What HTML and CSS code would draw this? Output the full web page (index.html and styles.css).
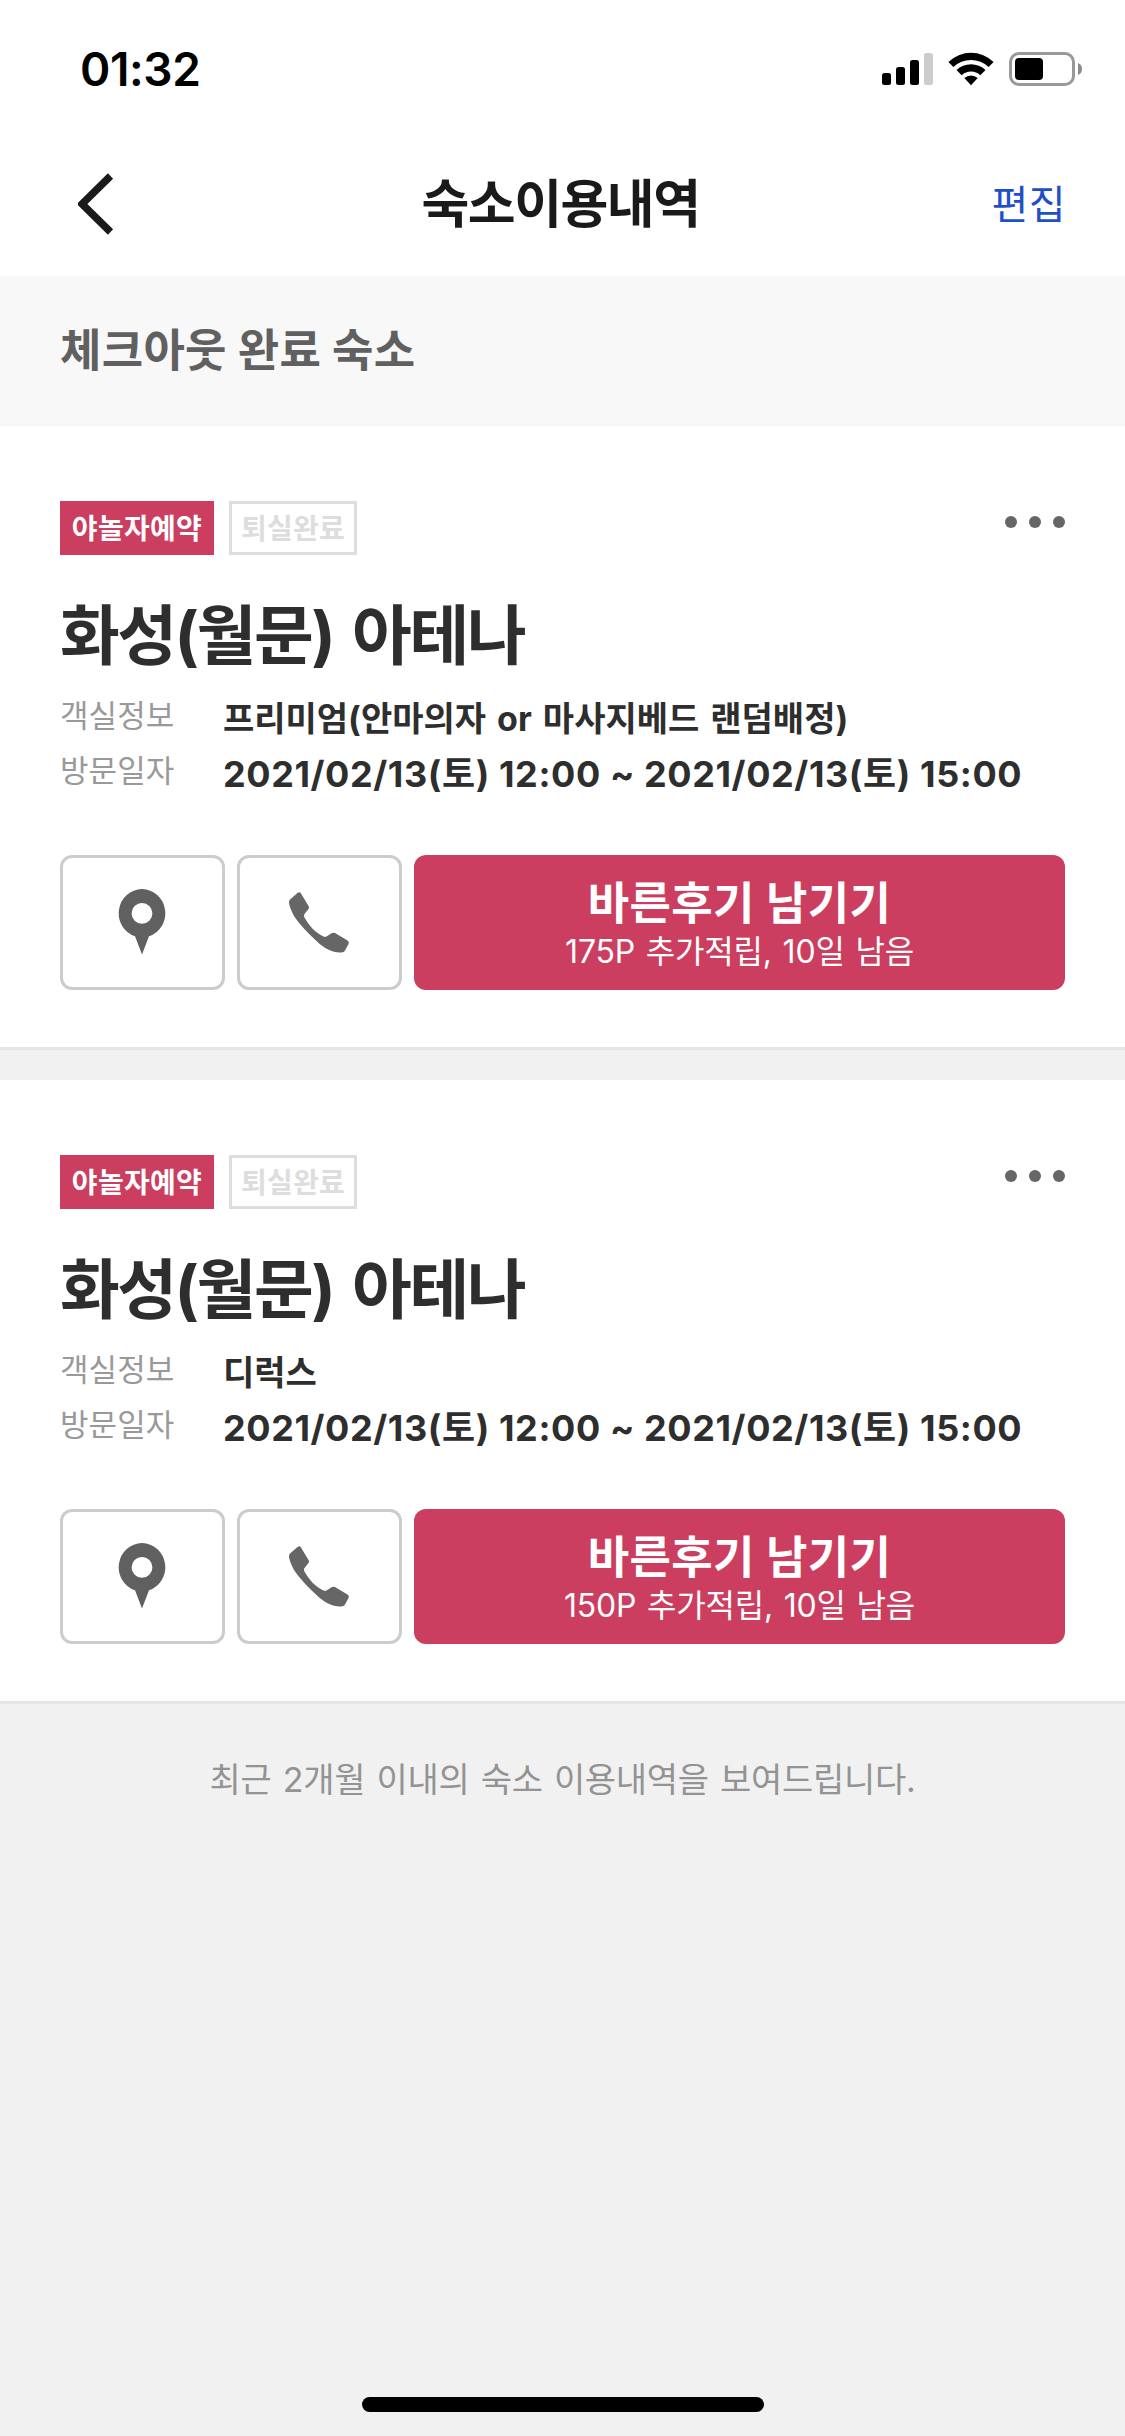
FILE: index.html
```html
<!DOCTYPE html>
<html lang="ko">
<head>
<meta charset="utf-8">
<title>숙소이용내역</title>
<link rel="stylesheet" href="styles.css">
</head>
<body>
<div class="screen">
  <div class="statusbar">
    <span class="clock">01:32</span>
    <div class="status-icons">
      <svg class="signal" width="51" height="33" viewBox="0 0 51 33"><rect x="0" y="20" width="9" height="12" rx="2.5"/><rect x="14" y="14" width="9" height="18" rx="2.5"/><rect x="28" y="7" width="9" height="25" rx="2.5"/><rect x="42" y="0" width="9" height="32" rx="2.5" fill="#ccc"/></svg>
      <svg class="wifi" width="46" height="34" viewBox="0 0 46 34"><path d="M0.4 10A32.5 32.5 0 0 1 45.6 10L40.6 15A25.4 25.4 0 0 0 5.4 15Z"/><path d="M8.5 18A21 21 0 0 1 37.5 18L32.3 23.2A13.6 13.6 0 0 0 13.7 23.2Z"/><path d="M16.3 26A10 10 0 0 1 29.7 26L23 33.2Z"/></svg>
      <svg class="battery" width="73" height="34" viewBox="0 0 73 34"><rect x="1.5" y="1.5" width="63" height="31" rx="8.5" fill="none" stroke="#999" stroke-width="3"/><rect x="6" y="6" width="28" height="22" rx="4"/><path d="M69 11a6.5 6.5 0 0 1 0 12z" fill="#8c8c8c"/></svg>
    </div>
  </div>
  <header class="navbar">
    <svg class="back" width="36" height="62" viewBox="0 0 36 62"><path d="M32.5 3L4 31L32.5 59" fill="none" stroke="#1a1a1a" stroke-width="7.4"/></svg>
    <h1 class="nav-title">숙소이용내역</h1>
    <a class="nav-edit">편집</a>
  </header>
  <h2 class="section-title">체크아웃 완료 숙소</h2>

  <article class="card">
    <div class="card-top">
      <div class="badges"><span class="badge badge-solid">야놀자예약</span><span class="badge badge-outline">퇴실완료</span></div>
      <div class="more"><i></i><i></i><i></i></div>
    </div>
    <h3 class="hotel">화성(월문) 아테나</h3>
    <dl class="info">
      <dt>객실정보</dt><dd>프리미엄(안마의자 or 마사지베드 랜덤배정)</dd>
      <dt>방문일자</dt><dd class="dates">2021/02/13(토) 12:00 ~ 2021/02/13(토) 15:00</dd>
    </dl>
    <div class="actions">
      <a class="icon-btn"><svg width="49" height="67" viewBox="0 0 49 67"><path fill-rule="evenodd" d="M24 0a24 24.300 0 0 1 7 47.300L24 65.500L17 47.300A24 24.300 0 0 1 24 0zM24 14a10.400 10.400 0 1 0 0 20.800a10.400 10.400 0 0 0 0-20.800z" fill="#606060"/></svg></a>
      <a class="icon-btn"><svg width="61" height="61" viewBox="0 0 61 61"><path d="M1 7.500L8.500 1Q10.800-.5 12 1.500L19.500 14Q20.500 15.500 19.500 17L15.500 22Q14.500 23.500 15.500 25.500C20 34 27 41 34.500 44.500Q36 45.200 37.500 44.500L42.500 41.200Q44.500 40.300 46 41L58.500 48.500Q60.500 50 59.500 52L56 58.500Q55.200 60 53.500 60.300C45 61.500 36 57 28 49.500C20 42 10 32 5 24C2 18 0 13 0 10Q0 8.500 1 7.500z" fill="#666"/></svg></a>
      <a class="review"><strong>바른후기 남기기</strong><span>175P 추가적립, 10일 남음</span></a>
    </div>
  </article>

  <article class="card">
    <div class="card-top">
      <div class="badges"><span class="badge badge-solid">야놀자예약</span><span class="badge badge-outline">퇴실완료</span></div>
      <div class="more"><i></i><i></i><i></i></div>
    </div>
    <h3 class="hotel">화성(월문) 아테나</h3>
    <dl class="info">
      <dt>객실정보</dt><dd>디럭스</dd>
      <dt>방문일자</dt><dd class="dates">2021/02/13(토) 12:00 ~ 2021/02/13(토) 15:00</dd>
    </dl>
    <div class="actions">
      <a class="icon-btn"><svg width="49" height="67" viewBox="0 0 49 67"><path fill-rule="evenodd" d="M24 0a24 24.300 0 0 1 7 47.300L24 65.500L17 47.300A24 24.300 0 0 1 24 0zM24 14a10.400 10.400 0 1 0 0 20.800a10.400 10.400 0 0 0 0-20.800z" fill="#606060"/></svg></a>
      <a class="icon-btn"><svg width="61" height="61" viewBox="0 0 61 61"><path d="M1 7.500L8.500 1Q10.800-.5 12 1.500L19.500 14Q20.500 15.500 19.500 17L15.500 22Q14.500 23.500 15.500 25.500C20 34 27 41 34.500 44.500Q36 45.200 37.500 44.500L42.500 41.200Q44.500 40.300 46 41L58.500 48.500Q60.500 50 59.500 52L56 58.500Q55.200 60 53.500 60.300C45 61.500 36 57 28 49.500C20 42 10 32 5 24C2 18 0 13 0 10Q0 8.500 1 7.500z" fill="#666"/></svg></a>
      <a class="review"><strong>바른후기 남기기</strong><span>150P 추가적립, 10일 남음</span></a>
    </div>
  </article>
  <p class="notice">최근 2개월 이내의 숙소 이용내역을 보여드립니다.</p>
  <div class="home-indicator"></div>
</div>
</body>
</html>
```
FILE: styles.css
```css
* { box-sizing: border-box; margin: 0; padding: 0; }
body { background: #f1f1f1; font-family: Inter, "Noto Sans CJK KR", sans-serif; }
.screen { width: 1125px; height: 2436px; display: flex; flex-direction: column; background: #f1f1f1; }

/* Status bar */
.statusbar { height: 132px; background: #fff; display: flex; justify-content: space-between; padding: 39px 43px 0 80px; }
.clock { font-size: 46px; font-weight: 600; line-height: 60px; letter-spacing: -.4px; }
.status-icons { display: flex; align-items: flex-start; padding-top: 13px; }
.signal { margin: 1px 15px 0 0; }
.wifi { margin-right: 15px; }

/* Navigation */
.navbar { height: 144px; background: #fff; display: grid; grid-template-columns: 1fr auto 1fr; align-items: center; padding: 0 59px 0 55px; }
.back { margin-left: 23px; }
.nav-title { font-size: 52px; font-weight: 700; letter-spacing: -1.5px; color: #1a1a1a; line-height: 60px; padding-top: 2px; }
.nav-edit { justify-self: end; font-size: 40px; color: #1f4fc8; letter-spacing: .5px; line-height: 50px; padding-top: 2px; }
.section-title { height: 150px; background: #f8f8f8; color: #606060; font-size: 45px; font-weight: 700; line-height: 150px; padding-left: 60px; letter-spacing: .3px; }

/* Booking card */
.card { height: 654px; border-bottom: 30px solid #f1f1f1; background: #fff; box-shadow: inset 0 -3px #e5e5e5; padding: 75px 60px 0; }
.card-top { display: flex; justify-content: space-between; height: 54px; }
.badges { display: flex; gap: 15px; }
.badge { height: 54px; line-height: 56px; text-align: center; font-size: 28px; font-weight: 700; letter-spacing: .3px; }
.badge-solid { width: 154px; background: #cb3e5f; color: #fff; }
.badge-outline { width: 128px; line-height: 50px; border: 3px solid #ddd; color: #ddd; }
.more { display: flex; gap: 12px; padding-top: 15px; }
.more i { width: 12px; height: 12px; border-radius: 50%; background: #666; }
.hotel { font-size: 65px; font-weight: 700; line-height: 80px; margin-top: 41px; color: #2e2e2e; letter-spacing: -2.5px; word-spacing: 6px; }
.info { display: grid; grid-template-columns: 163px 1fr; grid-auto-rows: 55px; margin-top: 13px; line-height: 54px; }
.info dt { font-size: 31px; color: #999; font-weight: 400; letter-spacing: .1px; }
.info dd { font-size: 34px; color: #2e2e2e; font-weight: 700; white-space: nowrap; word-spacing: 3px; padding-top: 3px; }
.info .dates { font-size: 36px; letter-spacing: .6px; word-spacing: 0; padding-top: 3px; }
.actions { display: flex; gap: 12px; margin-top: 56px; }
.icon-btn { width: 165px; height: 135px; border: 3px solid #ccc; border-radius: 12px; display: grid; place-items: center; }
.review { flex: 1; height: 135px; border-radius: 12px; background: #cb3e5f; color: #fff; display: flex; flex-direction: column; align-items: center; padding-top: 21px; }
.review strong { font-size: 45px; line-height: 56px; letter-spacing: .4px; }
.review span { font-size: 32px; line-height: 40px; font-weight: 400; letter-spacing: -.2px; word-spacing: 2px; }

.notice { text-align: center; margin-top: 21px; font-size: 34px; line-height: 50px; color: #939393; font-weight: 400; letter-spacing: -.3px; word-spacing: 2px; }
.home-indicator { width: 402px; height: 15px; border-radius: 8px; background: #000; margin: auto auto 24px 362px; }
```
